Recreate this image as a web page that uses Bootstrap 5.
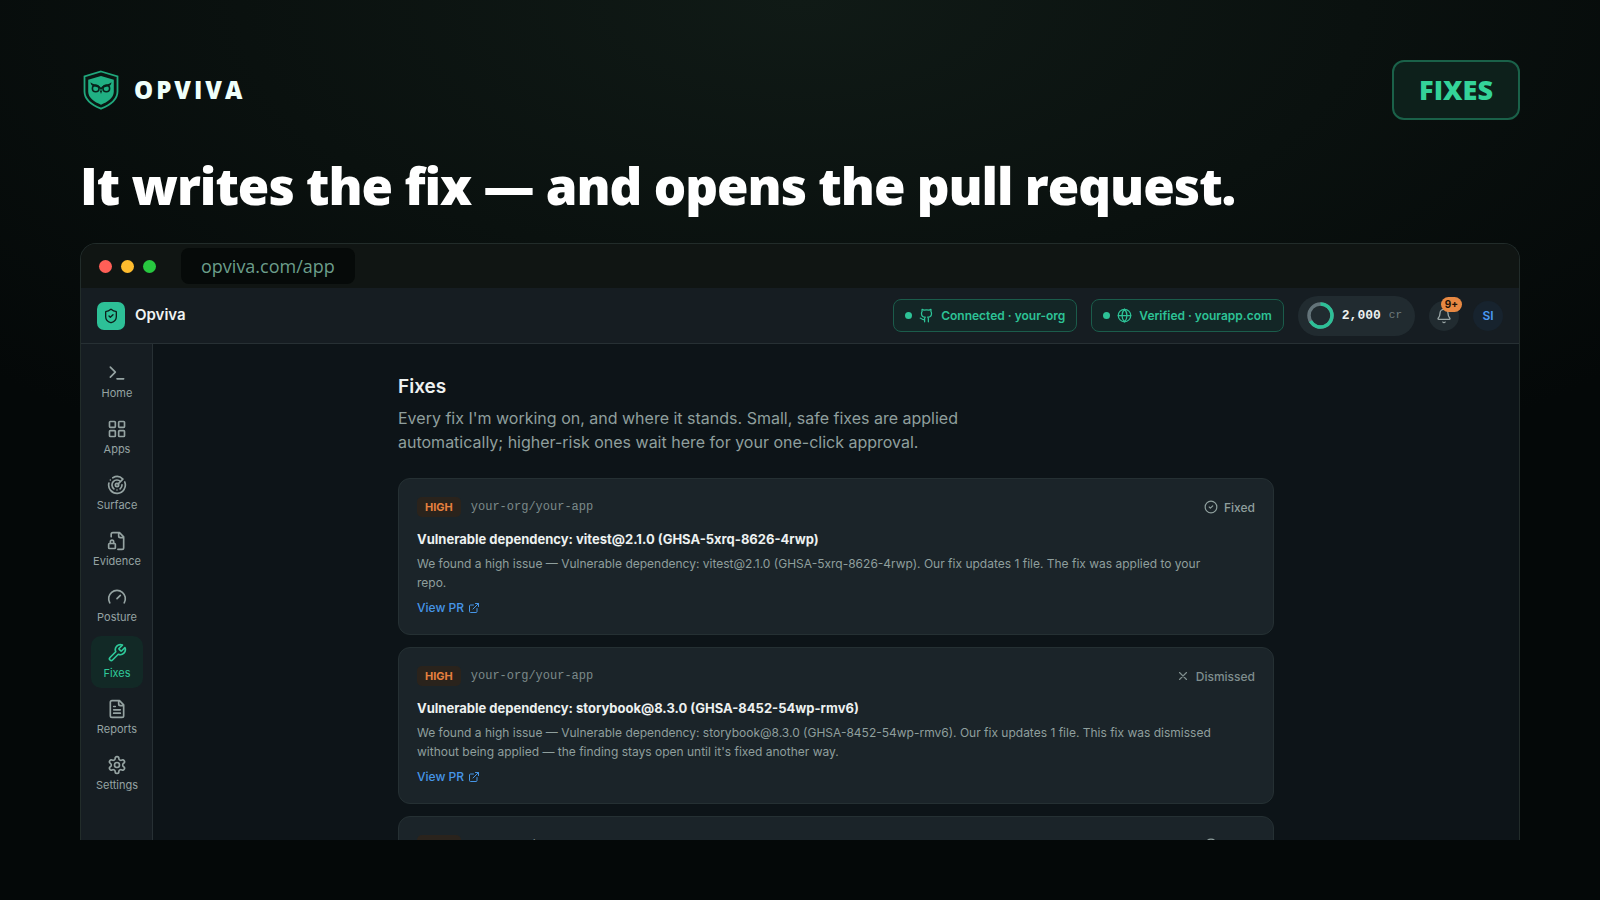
<!DOCTYPE html>
<html lang="en" data-bs-theme="dark">
<head>
<meta charset="utf-8">
<meta name="viewport" content="width=device-width, initial-scale=1">
<title>Opviva – Fixes</title>
<link rel="stylesheet" href="https://cdn.jsdelivr.net/npm/bootstrap@5.3.0/dist/css/bootstrap.min.css">
<style>
  body { font-family: Inter, "Liberation Sans", sans-serif; color: #8f9f9d; background: radial-gradient(ellipse 70% 60% at 50% 0, #101a16 0, #0a110f 50%, #040808 100%) #030505; }
  a { text-decoration: none; }
  .stage { height: 100vh; padding: 60px 80px; }
  .brand-row { gap: 14px; }
  .wordmark, .headline, .tag { font-family: "Open Sans", "Noto Sans", sans-serif; font-weight: 800; }
  .wordmark { font-size: 24px; letter-spacing: 3px; color: #effffa; line-height: 32px; }
  .tag { font-size: 27px; line-height: 36px; color: #34d399; background: #0d201b; border: 2px solid #1a6149; border-radius: 12px; padding: 10px 25px; }
  .headline { font-size: 51px; line-height: 60px; letter-spacing: -1px; color: #fff; margin: 35px 0 28px; }
  .window { border: 1px solid #222c2a; border-bottom: 0; border-radius: 16px 16px 0 0; background: #0d1418; min-height: 0; }
  .chrome { height: 44px; background: #101513; padding: 0 18px; }
  .lights { gap: 9px; }
  .light { width: 13px; height: 13px; border-radius: 50%; }
  .address { font-family: "Open Sans", "Noto Sans", sans-serif; font-size: 18px; line-height: 24px; color: #6c9e8b; background: #060a09; border-radius: 8px; padding: 6px 20px; margin-left: 25px; }
  .topbar { height: 56px; background: #161d22; border-bottom: 1px solid #273034; padding: 0 16px; }
  .topbar-tools { gap: 14px; }
  .app-logo { width: 28px; height: 28px; border-radius: 7px; background: #2dc097; color: #0c1f1a; margin-right: 10px; }
  .app-name { font-size: 15px; color: #f0f3f2; }
  .status { font-size: 12px; line-height: 19px; color: #2dc296; background: #132626; border: 1px solid #1b5c4b; border-radius: 8px; padding: 6px 11px; font-weight: 600; }
  .dot { width: 7px; height: 7px; border-radius: 50%; background: #2dc296; margin-right: 7px; }
  .status .icon { margin-right: 7px; }
  .credits { height: 40px; border-radius: 20px; background: #212b30; padding: 0 13px 0 9px; font-family: "Liberation Mono", monospace; font-size: 13px; }
  .round { width: 30px; height: 30px; border-radius: 50%; border: 0; padding: 0; background: #212b30; color: #99a5a5; }
  .count { top: -4px; right: -3px; height: 15px; line-height: 15px; border-radius: 8px; padding: 0 4px; background: #e88943; color: #211308; font-size: 10px; font-weight: 700; }
  .avatar { background: #17232e; color: #4b9af4; font-size: 12px; font-weight: 600; }
  .rail { width: 72px; background: #161d22; border-right: 1px solid #273034; padding: 12px 10px; gap: 4px; flex: none; }
  .rail a { width: 52px; height: 52px; border-radius: 10px; color: #95a3a2; font-size: 11px; line-height: 14px; gap: 3px; padding-bottom: 2px; }
  .rail a.active { background: #122926; color: #2fc99a; }
  .icon { fill: none; stroke: currentColor; stroke-width: 2; stroke-linecap: round; stroke-linejoin: round; flex: none; }
  .feed { max-width: 876px; padding-top: 30px; }
  .feed h2 { font-size: 19px; line-height: 26px; font-weight: 600; color: #edf1f0; margin-bottom: 6px; }
  .intro { font-size: 16px; line-height: 24px; max-width: 600px; margin-bottom: 24px; }
  .fix { background: #1b2429; border: 1px solid #253033; border-radius: 12px; padding: 18px 18px 17px; margin-bottom: 12px; font-size: 12px; line-height: 19px; }
  .severity { font-size: 11px; line-height: 14px; font-weight: 700; color: #e5803f; background: #2a231c; border-radius: 5px; padding: 3px 8px; margin-right: 10px; }
  .repo { font-family: "Liberation Mono", monospace; font-size: 12px; color: #7c8a8a; }
  .fix h3 { font-size: 13px; line-height: 20px; font-weight: 700; color: #edf1f0; margin: 12px 0 5px; }
  .fix p { margin-bottom: 6px; max-width: 800px; }
  .fix a { color: #4696e8; font-weight: 500; }
  .result { font-weight: 500; gap: 6px; }
  .muted { color: #7f8e8e; }
</style>
</head>
<body>
<svg width="0" height="0" class="position-absolute" aria-hidden="true">
  <symbol id="ext" viewBox="0 0 24 24"><path d="M15 3h6v6M10 14 21 3M18 13v6a2 2 0 0 1-2 2H5a2 2 0 0 1-2-2V8a2 2 0 0 1 2-2h6"/></symbol>
  <symbol id="check" viewBox="0 0 24 24"><circle cx="12" cy="12" r="10"/><path d="m9 12 2 2 4-4"/></symbol>
</svg>
<div class="stage d-flex flex-column overflow-hidden">
  <header class="d-flex justify-content-between align-items-center">
    <div class="brand-row d-flex align-items-center">
      <svg width="40" height="40" viewBox="0 0 40 40" aria-hidden="true">
        <path d="M21 1.500 37.500 6.500v15C37.500 29.500 29 35.500 21 38.700 13 35.500 4.500 29.500 4.500 21.500v-15Z" fill="#0a1713" stroke="#20a77c" stroke-width="1.800"/>
        <path d="M21 6 33.800 9.800v11.700c0 6.500-6.300 10.500-12.800 13.200-6.500-2.700-12.800-6.700-12.800-13.200V9.800Z" fill="#20b083"/>
        <circle cx="15.700" cy="18.500" r="3.300" fill="#20b083" stroke="#08231b" stroke-width="1.600"/>
        <circle cx="26.300" cy="18.500" r="3.300" fill="#20b083" stroke="#08231b" stroke-width="1.600"/>
        <path d="M10.500 12.300c2.500 2.500 8 2 10.500 5.400 2.500-3.400 8-2.900 10.500-5.400-.3 3.200-2.500 4-5 4.400-2.500.5-4 1.300-5.500 3.300-1.500-2-3-2.800-5.500-3.300-2.500-.4-4.700-1.200-5-4.400ZM19.800 20.500h2.400L21 24Z" fill="#08231b"/>
      </svg>
      <span class="wordmark">OPVIVA</span>
    </div>
    <span class="tag">FIXES</span>
  </header>
  <h1 class="headline">It writes the fix — and opens the pull request.</h1>

  <main class="window flex-fill d-flex flex-column overflow-hidden">
    <div class="chrome d-flex align-items-center flex-shrink-0">
      <div class="lights d-flex"><span class="light" style="background:#ff5f57"></span><span class="light" style="background:#febc2e"></span><span class="light" style="background:#28c840"></span></div>
      <span class="address">opviva.com/app</span>
    </div>
    <div class="topbar d-flex align-items-center flex-shrink-0">
      <span class="app-logo d-flex align-items-center justify-content-center"><svg class="icon" width="16" height="16" viewBox="0 0 24 24"><path d="M20 13c0 5-3.500 7.500-7.660 8.950a1 1 0 0 1-.67-.01C7.500 20.500 4 18 4 13V6a1 1 0 0 1 1-1c2 0 4.500-1.200 6.240-2.720a1.170 1.170 0 0 1 1.520 0C14.510 3.810 17 5 19 5a1 1 0 0 1 1 1zM9 12l2 2 4-4"/></svg></span>
      <span class="app-name fw-semibold">Opviva</span>
      <div class="topbar-tools d-flex align-items-center ms-auto">
        <span class="status d-flex align-items-center"><span class="dot"></span><svg class="icon" width="15" height="15" viewBox="0 0 24 24"><path d="M15 22v-4a4.800 4.800 0 0 0-1-3.500c3 0 6-2 6-5.500.08-1.250-.27-2.480-1-3.500.28-1.150.28-2.350 0-3.500 0 0-1 0-3 1.500-2.640-.5-5.360-.5-8 0C6 2 5 2 5 2c-.3 1.150-.3 2.350 0 3.500A5.403 5.403 0 0 0 4 9c0 3.500 3 5.500 6 5.500-.39.49-.68 1.050-.85 1.650-.17.6-.22 1.230-.15 1.850v4M9 18c-4.510 2-5-2-7-2"/></svg>Connected · your-org</span>
        <span class="status d-flex align-items-center"><span class="dot"></span><svg class="icon" width="15" height="15" viewBox="0 0 24 24"><circle cx="12" cy="12" r="10"/><path d="M12 2a14.500 14.500 0 0 0 0 20 14.500 14.500 0 0 0 0-20M2 12h20"/></svg>Verified · yourapp.com</span>
        <span class="credits d-flex align-items-center"><svg class="me-2" width="27" height="27" viewBox="0 0 27 27" fill="none" stroke-width="3.500"><circle cx="13.500" cy="13.500" r="11.500" stroke="#64747a"/><path d="M13.500 2a11.500 11.500 0 1 1-10 17.200" stroke="#2dc097"/></svg><b style="color:#edf1f0">2,000</b><small class="ms-2" style="font-size:11px;color:#6f7c7e">cr</small></span>
        <button class="round position-relative d-flex align-items-center justify-content-center" aria-label="Notifications"><svg class="icon" width="16" height="16" viewBox="0 0 24 24"><path d="M10.268 21a2 2 0 0 0 3.464 0M3.262 15.326A1 1 0 0 0 4 17h16a1 1 0 0 0 .74-1.673C19.410 13.956 18 12.499 18 8A6 6 0 0 0 6 8c0 4.499-1.411 5.956-2.738 7.326"/></svg><span class="count position-absolute">9+</span></button>
        <button class="round avatar">SI</button>
      </div>
    </div>
    <div class="d-flex flex-fill overflow-hidden">
      <nav class="rail d-flex flex-column" aria-label="Main">
        <a href="#" class="d-flex flex-column align-items-center justify-content-center"><svg class="icon" width="20" height="20" viewBox="0 0 24 24"><path d="m4 17 6-6-6-6M12 19h8"/></svg>Home</a>
        <a href="#" class="d-flex flex-column align-items-center justify-content-center"><svg class="icon" width="20" height="20" viewBox="0 0 24 24"><rect x="3" y="3" width="7" height="7" rx="1"/><rect x="14" y="3" width="7" height="7" rx="1"/><rect x="14" y="14" width="7" height="7" rx="1"/><rect x="3" y="14" width="7" height="7" rx="1"/></svg>Apps</a>
        <a href="#" class="d-flex flex-column align-items-center justify-content-center"><svg class="icon" width="20" height="20" viewBox="0 0 24 24"><path d="M19.070 4.930A10 10 0 0 0 6.990 3.340M4 6h.01M2.290 9.620A10 10 0 1 0 21.310 8.350M16.240 7.760A6 6 0 1 0 8.230 16.670M12 18h.01M17.990 11.660A6 6 0 0 1 15.770 16.670M13.410 10.590l5.660-5.660"/><circle cx="12" cy="12" r="2"/></svg>Surface</a>
        <a href="#" class="d-flex flex-column align-items-center justify-content-center"><svg class="icon" width="20" height="20" viewBox="0 0 24 24"><path d="M5 7V4a2 2 0 0 1 2-2h8l5 5v13a2 2 0 0 1-2 2h-5M14 2v4a2 2 0 0 0 2 2h4M8 15v-2a2 2 0 1 0-4 0v2"/><rect x="2" y="15" width="8" height="6" rx="1"/></svg>Evidence</a>
        <a href="#" class="d-flex flex-column align-items-center justify-content-center"><svg class="icon" width="20" height="20" viewBox="0 0 24 24"><path d="m12 14 4-4M3.340 19a10 10 0 1 1 17.320 0"/></svg>Posture</a>
        <a href="#" class="active d-flex flex-column align-items-center justify-content-center" aria-current="page"><svg class="icon" width="20" height="20" viewBox="0 0 24 24"><path d="M14.700 6.300a1 1 0 0 0 0 1.400l1.600 1.600a1 1 0 0 0 1.400 0l3.770-3.770a6 6 0 0 1-7.940 7.940l-6.910 6.910a2.120 2.120 0 0 1-3-3l6.910-6.910a6 6 0 0 1 7.940-7.940l-3.760 3.760z"/></svg>Fixes</a>
        <a href="#" class="d-flex flex-column align-items-center justify-content-center"><svg class="icon" width="20" height="20" viewBox="0 0 24 24"><path d="M15 2H6a2 2 0 0 0-2 2v16a2 2 0 0 0 2 2h12a2 2 0 0 0 2-2V7ZM14 2v4a2 2 0 0 0 2 2h4M10 9H8M16 13H8M16 17H8"/></svg>Reports</a>
        <a href="#" class="d-flex flex-column align-items-center justify-content-center"><svg class="icon" width="20" height="20" viewBox="0 0 24 24"><path d="M12.220 2h-.44a2 2 0 0 0-2 2v.18a2 2 0 0 1-1 1.730l-.43.25a2 2 0 0 1-2 0l-.15-.08a2 2 0 0 0-2.730.73l-.22.38a2 2 0 0 0 .73 2.730l.15.1a2 2 0 0 1 1 1.720v.51a2 2 0 0 1-1 1.740l-.15.09a2 2 0 0 0-.73 2.730l.22.38a2 2 0 0 0 2.730.73l.15-.08a2 2 0 0 1 2 0l.43.25a2 2 0 0 1 1 1.730V20a2 2 0 0 0 2 2h.44a2 2 0 0 0 2-2v-.18a2 2 0 0 1 1-1.730l.43-.25a2 2 0 0 1 2 0l.15.08a2 2 0 0 0 2.730-.73l.22-.39a2 2 0 0 0-.73-2.730l-.15-.08a2 2 0 0 1-1-1.740v-.5a2 2 0 0 1 1-1.740l.15-.09a2 2 0 0 0 .73-2.730l-.22-.38a2 2 0 0 0-2.730-.73l-.15.08a2 2 0 0 1-2 0l-.43-.25a2 2 0 0 1-1-1.730V4a2 2 0 0 0-2-2z"/><circle cx="12" cy="12" r="3"/></svg>Settings</a>
      </nav>
      <div class="flex-fill overflow-hidden">
        <section class="feed mx-auto">
          <h2>Fixes</h2>
          <p class="intro">Every fix I'm working on, and where it stands. Small, safe fixes are applied automatically; higher-risk ones wait here for your one-click approval.</p>
          <article class="fix">
            <div class="d-flex align-items-center"><span class="severity">HIGH</span><span class="repo">your-org/your-app</span><span class="result ms-auto d-flex align-items-center"><svg class="icon" width="14" height="14"><use href="#check"/></svg>Fixed</span></div>
            <h3>Vulnerable dependency: vitest@2.1.0 (GHSA-5xrq-8626-4rwp)</h3>
            <p>We found a high issue — Vulnerable dependency: vitest@2.1.0 (GHSA-5xrq-8626-4rwp). Our fix updates 1 file. The fix was applied to your repo.</p>
            <a href="#" class="d-inline-flex align-items-center">View PR<svg class="icon ms-1" width="12" height="12"><use href="#ext"/></svg></a>
          </article>
          <article class="fix">
            <div class="d-flex align-items-center"><span class="severity">HIGH</span><span class="repo">your-org/your-app</span><span class="result muted ms-auto d-flex align-items-center"><svg class="icon" width="14" height="14" viewBox="0 0 24 24"><path d="M18 6 6 18M6 6l12 12"/></svg>Dismissed</span></div>
            <h3>Vulnerable dependency: storybook@8.3.0 (GHSA-8452-54wp-rmv6)</h3>
            <p>We found a high issue — Vulnerable dependency: storybook@8.3.0 (GHSA-8452-54wp-rmv6). Our fix updates 1 file. This fix was dismissed without being applied — the finding stays open until it's fixed another way.</p>
            <a href="#" class="d-inline-flex align-items-center">View PR<svg class="icon ms-1" width="12" height="12"><use href="#ext"/></svg></a>
          </article>
          <article class="fix">
            <div class="d-flex align-items-center"><span class="severity">HIGH</span><span class="repo">your-org/your-app</span><span class="result ms-auto d-flex align-items-center"><svg class="icon" width="14" height="14"><use href="#check"/></svg>Fixed</span></div>
          </article>
        </section>
      </div>
    </div>
  </main>
</div>
<script src="https://cdn.jsdelivr.net/npm/bootstrap@5.3.0/dist/js/bootstrap.bundle.min.js"></script>
</body>
</html>
